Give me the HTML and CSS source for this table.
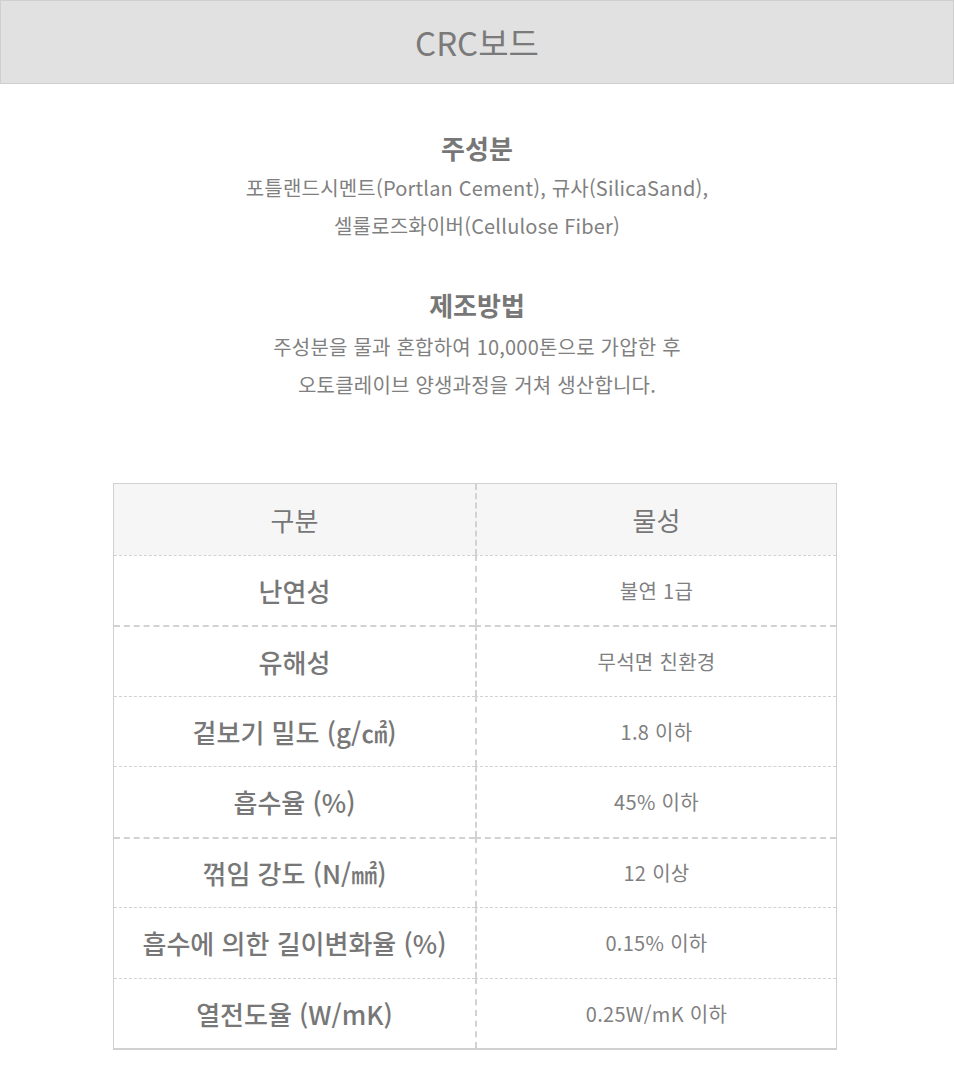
FILE: index.html
```html
<!DOCTYPE html>
<html lang="ko">
<head>
<meta charset="utf-8">
<title>CRC보드</title>
<link rel="stylesheet" href="styles.css">
</head>
<body>
<header class="topbar"><h1 class="title">CRC보드</h1></header>
<section class="info first">
  <h2 class="info-head">주성분</h2>
  <p class="info-text">포틀랜드시멘트(Portlan Cement), 규사(SilicaSand),<br>셀룰로즈화이버(Cellulose Fiber)</p>
</section>
<section class="info second">
  <h2 class="info-head">제조방법</h2>
  <p class="info-text">주성분을 물과 혼합하여 10,000톤으로 가압한 후<br>오토클레이브 양생과정을 거쳐 생산합니다.</p>
</section>
<div class="spec">
  <div class="cell lab head">구분</div><div class="cell val head">물성</div>
  <div class="cell lab sep-thin">난연성</div><div class="cell val sep-thin">불연 1급</div>
  <div class="cell lab sep-thick">유해성</div><div class="cell val sep-thick">무석면 친환경</div>
  <div class="cell lab sep-thin">겉보기 밀도 (g/㎠)</div><div class="cell val sep-thin">1.8 이하</div>
  <div class="cell lab sep-thin">흡수율 (%)</div><div class="cell val sep-thin">45% 이하</div>
  <div class="cell lab sep-thick">꺾임 강도 (N/㎟)</div><div class="cell val sep-thick">12 이상</div>
  <div class="cell lab sep-thin">흡수에 의한 길이변화율 (%)</div><div class="cell val sep-thin">0.15% 이하</div>
  <div class="cell lab sep-thin">열전도율 (W/mK)</div><div class="cell val sep-thin">0.25W/mK 이하</div>
</div>
</body>
</html>
```
FILE: styles.css
```css
html, body {
  margin: 0;
  padding: 0;
  background: #fff;
}
body {
  font-family: "Noto Sans CJK KR", "Noto Sans", sans-serif;
  color: #777;
}
.topbar {
  box-sizing: border-box;
  height: 84px;
  border: 1px solid #cfcfcf;
  background: #e1e1e1;
  display: flex;
  align-items: center;
  justify-content: center;
}
.title {
  margin: 0;
  font-size: 33px;
  font-weight: 400;
  color: #7a7a7a;
  line-height: 40px;
}
.info {
  text-align: center;
}
.info.first { margin-top: 44px; }
.info.second { margin-top: 40px; }
.info-head {
  margin: 0;
  font-size: 26px;
  font-weight: 700;
  line-height: 40px;
  color: #777;
}
.info-text {
  margin: 1px 0 0;
  font-size: 20px;
  line-height: 38px;
  color: #808080;
  letter-spacing: 0.2px;
}
.second .info-text { margin-top: 3px; }
.spec {
  margin: 79px 0 20px 113px;
  width: 724px;
  box-sizing: border-box;
  display: grid;
  grid-template-columns: 361px 1fr;
  border: 1px solid #d0d0d0;
  border-bottom-width: 2px;
}
.cell {
  height: 70.5px;
  box-sizing: border-box;
  display: flex;
  align-items: center;
  justify-content: center;
}
.lab {
  font-size: 26px;
  font-weight: 500;
  color: #777;
}
.val {
  border-left: 2px dashed #d2d2d2;
  font-size: 20px;
  letter-spacing: 0.3px;
  color: #808080;
}
.cell.head {
  background: #f6f6f6;
  font-size: 26px;
  font-weight: 400;
  letter-spacing: 0;
  color: #777;
}
.sep-thin { border-top: 1px dashed #d2d2d2; }
.sep-thick { border-top: 2px dashed #d2d2d2; }
```
